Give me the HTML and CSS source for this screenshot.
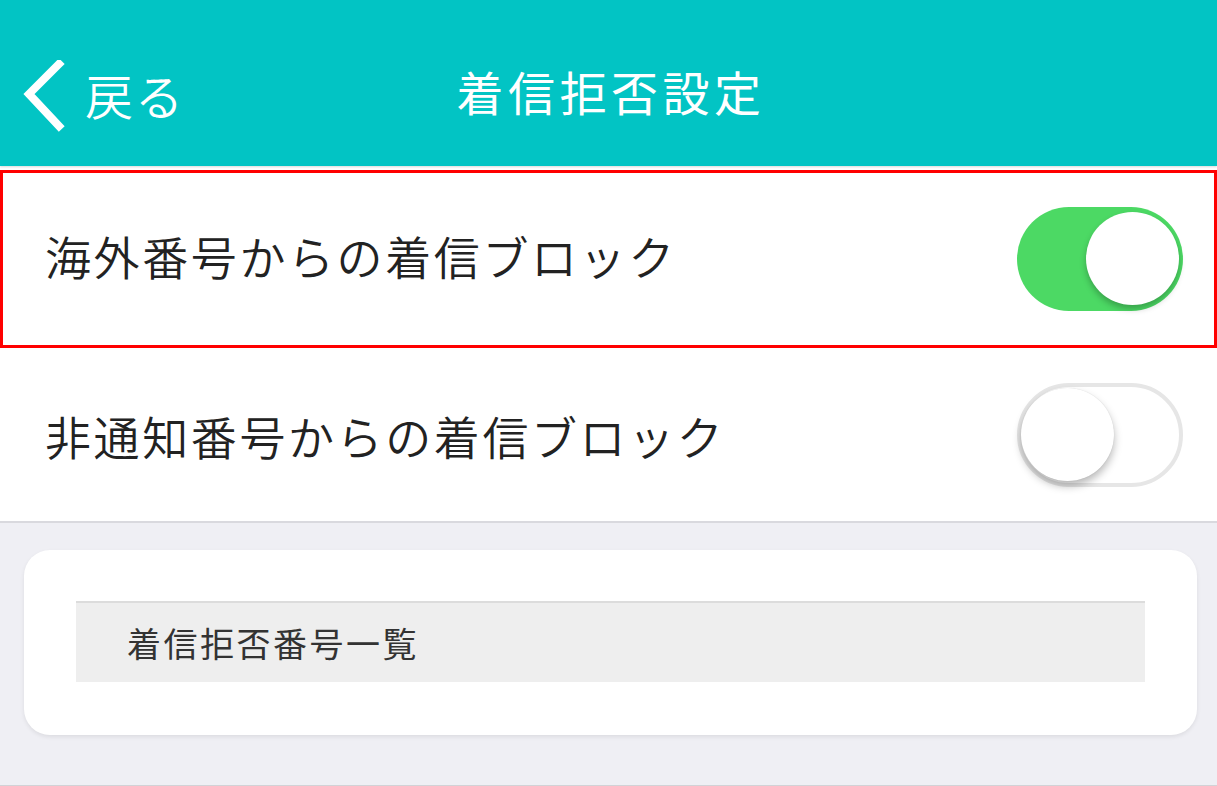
FILE: index.html
```html
<!DOCTYPE html>
<html lang="ja">
<head>
<meta charset="utf-8">
<title>着信拒否設定</title>
<link rel="stylesheet" href="styles.css">
</head>
<body>
<div class="page">
  <header class="navbar">
    <div class="back">
      <svg class="chev" width="46" height="76" viewBox="0 0 46 76">
        <polyline points="38,4 8,34 38,66" fill="none" stroke="#fff" stroke-width="8" stroke-linecap="square"/>
      </svg>
      <span class="back-label">戻る</span>
    </div>
    <h1 class="title">着信拒否設定</h1>
  </header>
  <section class="rows">
    <div class="row row-highlight">
      <span class="row-label">海外番号からの着信ブロック</span>
      <span class="toggle on"><span class="knob"></span></span>
    </div>
    <div class="row row-last">
      <span class="row-label">非通知番号からの着信ブロック</span>
      <span class="toggle off"><span class="knob"></span></span>
    </div>
  </section>
  <section class="lower">
    <div class="card">
      <div class="list-btn">着信拒否番号一覧</div>
    </div>
  </section>
</div>
</body>
</html>
```

FILE: styles.css
```css
html, body {
  margin: 0;
  padding: 0;
}
body {
  background: #efeff4;
  font-family: "Noto Sans CJK JP", "Noto Sans", sans-serif;
  width: 1217px;
  height: 786px;
  overflow: hidden;
}
.page {
  display: flex;
  flex-direction: column;
  height: 786px;
}
.navbar {
  height: 166px;
  background: #02c4c4;
  box-shadow: 0 1px 2px rgba(0,0,0,0.15);
  display: flex;
  align-items: center;
  justify-content: center;
  position: relative;
  flex-shrink: 0;
}
.back {
  position: absolute;
  left: 21px;
  top: 60px;
  display: flex;
  align-items: center;
  gap: 18px;
}
.chev { display: block; }
.back-label {
  color: #fff;
  font-size: 48px;
  line-height: 1;
  letter-spacing: 2px;
  margin-top: -8px;
  font-weight: 350;
}
.title {
  margin: 0;
  color: #fff;
  font-size: 47px;
  font-weight: 400;
  letter-spacing: 4.5px;
  line-height: 1;
  margin-top: 14px;
  margin-left: 5px;
}
.rows {
  background: #fff;
  padding-top: 4px;
  flex-shrink: 0;
}
.row {
  display: flex;
  align-items: center;
  justify-content: space-between;
  box-sizing: border-box;
  padding: 0 34px 0 45px;
}
.row-highlight {
  height: 178px;
  border: 3px solid #ff0000;
  padding: 0 31px 0 42px;
}
.row-last {
  height: 175px;
  border-bottom: 2px solid #d9d9de;
}
.row-label {
  font-size: 46px;
  letter-spacing: 2.6px;
  color: #222;
  line-height: 1;
  font-weight: 350;
}
.row-highlight .row-label { margin-top: -8px; }
.toggle {
  width: 166px;
  height: 104px;
  border-radius: 52px;
  box-sizing: border-box;
  position: relative;
  flex-shrink: 0;
}
.toggle.on {
  background: #4cd964;
}
.toggle.off {
  background: #fff;
  border: 4px solid #e6e6e6;
}
.knob {
  position: absolute;
  width: 93px;
  height: 93px;
  border-radius: 50%;
  background: #fff;
}
.toggle.on .knob {
  right: 4px;
  top: 5px;
  box-shadow: 0 4px 6px rgba(0,0,0,0.25);
}
.toggle.off .knob {
  left: 0px;
  top: 1px;
  box-shadow: 0 5px 8px rgba(0,0,0,0.28), 0 0 1px rgba(0,0,0,0.15);
}
.lower {
  flex: 1;
  padding: 27px 20px 0 24px;
  border-bottom: 1px solid #d2d2d6;
}
.card {
  background: #fff;
  border-radius: 26px;
  padding: 51px 52px 53px 52px;
  box-shadow: 0 2px 4px rgba(0,0,0,0.08);
}
.list-btn {
  height: 81px;
  box-sizing: border-box;
  background: #eeeeee;
  border-top: 2px solid #dcdcdc;
  display: flex;
  align-items: center;
  padding-left: 51px;
  font-size: 34px;
  color: #333;
  letter-spacing: 2.5px;
}
```
